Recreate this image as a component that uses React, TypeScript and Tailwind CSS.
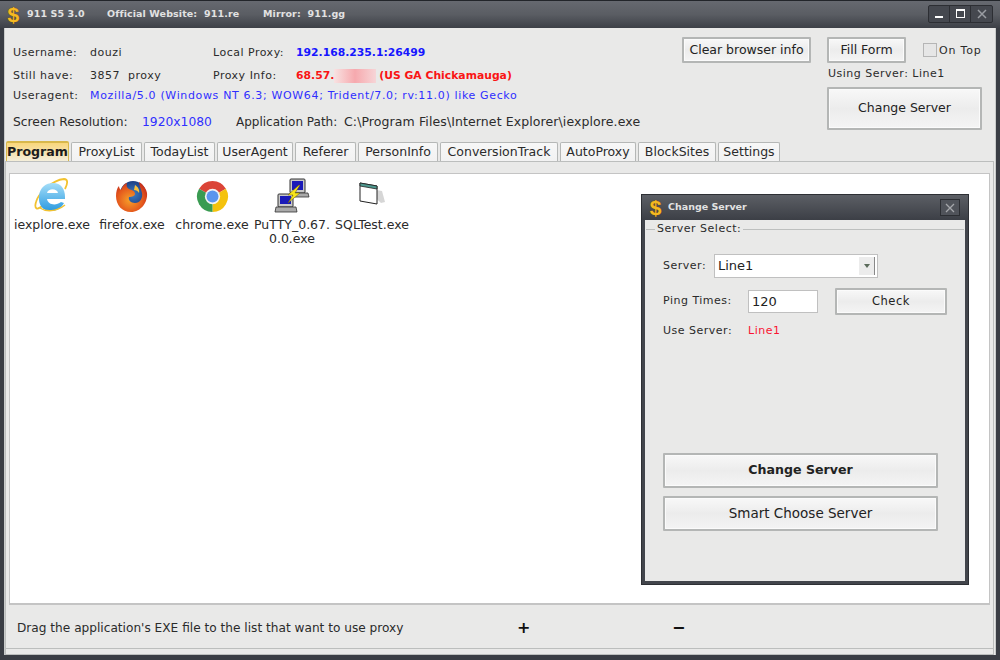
import React from "react";

const Btn = ({ className = "", children }: { className?: string; children: React.ReactNode }) => (
  <div className={"flex items-center justify-center border-2 border-[#b4b6b5] rounded-[1px] bg-gradient-to-b from-[#f8f8f8] via-[#ececec] to-[#f4f4f4] shadow-[inset_0_0_0_1px_#fbfbfb] text-[#222] " + className}>
    {children}
  </div>
);

const Dollar = () => (
  <span className="font-['Liberation_Sans',sans-serif] font-bold text-[21px] leading-none text-[#f5b921] [text-shadow:0_0_1px_#7a4b00]">$</span>
);

const IE = () => (
  <svg width="36" height="36" viewBox="0 0 36 36">
    <defs>
      <linearGradient id="ieg" x1="0" y1="0" x2="0" y2="1"><stop offset="0" stopColor="#a5def8" /><stop offset="1" stopColor="#2b9ae0" /></linearGradient>
    </defs>
    <path d="M9 27C3 33 0 31 2 24 4 16 18 2 30 1c4 0 4 4 1 10" fill="none" stroke="#f2c230" strokeWidth="1.8" />
    <path d="M5 18C6 9 12 5 19 5c8 0 12 6 12 14v2H13c1 6 9 7 14 3l3 1c-3 6-8 8-13 8C9 33 4 27 5 18z" fill="url(#ieg)" />
    <path d="M13 15h11c-1-5-10-5-11 0z" fill="#fff" />
    <path d="M6 30c6 4 16 4 25-3" fill="none" stroke="#f2c230" strokeWidth="1.5" />
  </svg>
);

const Firefox = () => (
  <svg width="34" height="34" viewBox="0 0 34 34">
    <defs>
      <radialGradient id="ffo" cx="0.45" cy="0.6" r="0.6"><stop offset="0" stopColor="#f7a12a" /><stop offset="0.7" stopColor="#e4571c" /><stop offset="1" stopColor="#c9341c" /></radialGradient>
      <radialGradient id="ffb" cx="0.5" cy="0.5" r="0.5"><stop offset="0" stopColor="#3d7fc4" /><stop offset="1" stopColor="#1c3f83" /></radialGradient>
    </defs>
    <circle cx="18" cy="15" r="13" fill="url(#ffb)" />
    <path d="M24 3c2 1 7 5 8 11 1 9-6 19-16 19C7 33 1 26 1 17c0-4 1-8 3-10 0 2 1 3 2 4 1-3 3-6 6-7-1 3 0 5 2 6 3 1 6 2 6 5 0 2-3 3-6 3-1 3 2 6 6 6 5 0 8-5 7-10-1-4-3-8-3-11z" fill="url(#ffo)" />
    <path d="M20 6c3 2 5 5 4 8-1-2-3-3-5-3z" fill="#f9c13a" />
  </svg>
);

const Chrome = () => (
  <svg width="33" height="33" viewBox="0 0 32 32">
    <path d="M16 16 L3 8.5 A15 15 0 0 1 29 8.5 Z" fill="#db4437" />
    <path d="M16 16 L29 8.5 A15 15 0 0 1 16 31 Z" fill="#f4c20d" />
    <path d="M16 16 L16 31 A15 15 0 0 1 3 8.5 Z" fill="#3a9b52" />
    <circle cx="16" cy="16" r="7.4" fill="#f3f3f3" />
    <circle cx="16" cy="16" r="5.8" fill="#5a95ee" />
  </svg>
);

const Putty = () => (
  <svg width="36" height="36" viewBox="0 0 36 36">
    <rect x="16" y="1" width="15" height="14" rx="1" fill="#c8c8c8" stroke="#333" />
    <rect x="18" y="3" width="11" height="9" fill="#1a1ab8" />
    <path d="M16 15h18l1 4H15z" fill="#aaa" stroke="#333" strokeWidth="0.8" />
    <rect x="4" y="16" width="15" height="13" rx="1" fill="#c8c8c8" stroke="#333" />
    <rect x="6" y="18" width="11" height="8" fill="#1a1ab8" />
    <path d="M2 29h20l1 5H1z" fill="#aaa" stroke="#333" strokeWidth="0.8" />
    <path d="M25 7l-11 10h5l-5 8 12-10h-5l5-8z" fill="#f7e51c" stroke="#6b5a00" strokeWidth="0.5" />
  </svg>
);

const SqlTest = () => (
  <svg width="30" height="30" viewBox="0 0 30 30">
    <path d="M8 7l17 3 3 11-4 1z" fill="#c4c4c4" opacity="0.7" />
    <path d="M3 2l17 3v18L3 20z" fill="#fff" stroke="#222" strokeWidth="1" />
    <path d="M3 2l17 3v3L3 5z" fill="#4f9a90" stroke="#222" strokeWidth="0.8" />
  </svg>
);

const tabs = [
  ["ProxyList", "w-[71px]"],
  ["TodayList", "w-[71px]"],
  ["UserAgent", "w-[76px]"],
  ["Referer", "w-[61px]"],
  ["PersonInfo", "w-[80px]"],
  ["ConversionTrack", "w-[118px]"],
  ["AutoProxy", "w-[76px]"],
  ["BlockSites", "w-[78px]"],
  ["Settings", "w-[62px]"],
];

const files: [string, React.ReactNode][] = [
  ["iexplore.exe", <IE />],
  ["firefox.exe", <Firefox />],
  ["chrome.exe", <Chrome />],
  ["PuTTY_0.67.0.0.exe", <Putty />],
  ["SQLTest.exe", <SqlTest />],
];

export default function App() {
  return (
    <div className="relative w-[1000px] h-[660px] overflow-hidden bg-[#3a3d44] font-['DejaVu_Sans',sans-serif] text-[11px] tracking-[0.5px] text-[#2b2b2b]">
      {/* title bar */}
      <div className="h-[28px] flex items-center border-t border-[#22252a] bg-gradient-to-b from-[#666970] via-[#5a5d63] via-50% to-[#3d4047] text-[#e2e2e2] font-bold text-[9.5px] tracking-[0.1px]">
        <div className="w-[27px] flex justify-center"><Dollar /></div>
        <span className="w-[80px]">911 S5 3.0</span>
        <span className="w-[156px]">Official Website:&nbsp; 911.re</span>
        <span>Mirror:&nbsp; 911.gg</span>
        <div className="ml-auto mr-[7px] flex h-[18px] -mt-[2px] border border-[#2c2e33] rounded-[2px] bg-[#45484f]">
          <div className="w-[21px] flex items-end justify-center pb-[4px] border-r border-[#2c2e33]"><div className="w-[8px] h-[2px] bg-white" /></div>
          <div className="w-[21px] flex items-center justify-center border-r border-[#2c2e33]"><div className="w-[9px] h-[9px] border border-white border-t-2" /></div>
          <div className="w-[21px] flex items-center justify-center">
            <svg width="10" height="10" viewBox="0 0 10 10"><path d="M1 1l8 8M9 1l-8 8" stroke="#9a9da3" strokeWidth="1.5" /></svg>
          </div>
        </div>
      </div>

      {/* window body */}
      <div className="mx-[4px] h-[627px] flex flex-col bg-[#e9e9e8] border-l border-r border-[#c9cbca]">
        {/* info */}
        <div className="h-[114px] flex">
          <div className="w-[669px] pl-[8px] pt-[17px] flex flex-col">
            <div className="flex h-[16px] items-center">
              <span className="w-[77px]">Username:</span>
              <span className="w-[123px]">douzi</span>
              <span className="w-[83px]">Local Proxy:</span>
              <span className="font-bold text-[#1616ff] text-[10.8px] tracking-normal">192.168.235.1:26499</span>
            </div>
            <div className="flex h-[16px] items-center mt-[7px]">
              <span className="w-[77px]">Still have:</span>
              <span className="w-[123px]">3857&nbsp; proxy</span>
              <span className="w-[83px]">Proxy Info:</span>
              <span className="font-bold text-[#fa1414] flex items-center text-[10.8px] tracking-normal">
                68.57.
                <span className="w-[42px] h-[14px] bg-gradient-to-r from-[#f7e2e2] via-[#f6a9ae] to-[#f6d5d7]" />
                <span className="ml-[3px]">(US GA Chickamauga)</span>
              </span>
            </div>
            <div className="flex h-[16px] items-center mt-[4px]">
              <span className="w-[77px]">Useragent:</span>
              <span className="text-[#2f2fff] tracking-[0.65px]">Mozilla/5.0 (Windows NT 6.3; WOW64; Trident/7.0; rv:11.0) like Gecko</span>
            </div>
            <div className="flex h-[18px] items-center mt-[9px] text-[12.3px] tracking-normal">
              <span className="w-[129px]">Screen Resolution:</span>
              <span className="w-[94px] text-[#2f2fff]">1920x1080</span>
              <span className="w-[108px] text-[12px]">Application Path:</span>
              <span className="text-[12.5px] tracking-[0.1px]">C:\Program Files\Internet Explorer\iexplore.exe</span>
            </div>
          </div>
          <div className="pl-[8px] pt-[9px]">
            <Btn className="w-[129px] h-[26px] text-[12.5px] tracking-normal">Clear browser info</Btn>
          </div>
          <div className="pl-[16px] pt-[9px] w-[175px] shrink-0">
            <div className="flex items-center">
              <Btn className="w-[79px] h-[26px] text-[12.5px] tracking-normal">Fill Form</Btn>
              <div className="ml-[17px] w-[14px] h-[14px] border border-[#b5b5b5] bg-[#e6e6e6]" />
              <span className="ml-[2px] pt-[3px] tracking-[0.8px]">On Top</span>
            </div>
            <div className="mt-[3px] h-[16px] flex items-center pl-[1px]">Using Server: Line1</div>
            <Btn className="mt-[5px] w-[155px] h-[43px] text-[12.5px] tracking-normal">Change Server</Btn>
          </div>
        </div>

        {/* tabs */}
        <div className="h-[19px] flex items-end gap-[2px] pl-[1px] text-[12.5px] tracking-normal">
          <div className="w-[63px] h-[21px] -mb-[1px] flex items-center justify-center font-bold text-[12.6px] text-[#1c1c1c] border-t-2 border-l border-r border-[#d8b84c] rounded-t-[2px] bg-gradient-to-b from-[#f9d679] to-[#f3efdf]">Program</div>
          {tabs.map(([t, w]) => (
            <div key={t} className={"h-[19px] flex items-center justify-center border border-b-0 border-[#b5b7b6] rounded-t-[2px] bg-gradient-to-b from-[#f7f7f7] to-[#f2f2f2] " + w}>{t}</div>
          ))}
        </div>

        {/* content */}
        <div className="flex-1 flex flex-col border border-[#bcbebd] mr-[1px]">
          <div className="h-[11px]" />
          <div className="mx-[3px] h-[432px] bg-white border border-[#c4c4c4] border-b-2 flex items-start pt-[4px] pl-[2px] text-[12.5px] tracking-normal">
            {files.map(([name, icon]) => (
              <div key={name} className="w-[80px] flex flex-col items-center text-center">
                <div className="h-[36px] flex items-center justify-center">{icon}</div>
                <span className="mt-[4px] leading-[14px] break-all w-full">{name}</span>
              </div>
            ))}
          </div>
          <div className="flex-1 flex items-center pl-[11px] pt-[3px] text-[12.15px] tracking-normal">
            <span className="w-[500px]">Drag the application's EXE file to the list that want to use proxy</span>
            <span className="w-[155px] font-bold text-[16px] text-[#111]">+</span>
            <span className="font-bold text-[16px] text-[#111]">−</span>
          </div>
          <div className="h-[6px] border-t border-[#bcbebd]" />
        </div>
      </div>

      {/* floating dialog */}
      <div className="absolute left-[641px] top-[194px] w-[328px] h-[391px] flex flex-col bg-[#42454c] border border-[#2d2f34] tracking-[0.5px]">
        <div className="h-[25px] flex items-center bg-gradient-to-b from-[#5c5f65] to-[#3c3f46] text-[#e2e2e2] font-bold text-[9.5px] tracking-normal">
          <div className="w-[26px] pl-[1px] flex justify-center"><Dollar /></div>
          <span>Change Server</span>
          <div className="ml-auto mr-[8px] w-[20px] h-[17px] flex items-center justify-center border border-[#2c2e33] bg-[#50535a]">
            <svg width="10" height="10" viewBox="0 0 10 10"><path d="M1 1l8 8M9 1l-8 8" stroke="#a5a7ab" strokeWidth="1.3" /></svg>
          </div>
        </div>
        <div className="flex-1 mx-[3px] mb-[3px] bg-[#e9e9e8] pt-[2px]">
          <div className="h-full flex flex-col">
            <div className="h-[14px] flex items-center">
              <div className="w-[9px] ml-[1px] h-px bg-[#bdbfbe]" />
              <span className="px-[2px] leading-[14px]">Server Select:</span>
              <div className="flex-1 mr-[1px] h-px bg-[#bdbfbe]" />
            </div>
            <div className="pl-[18px] pt-[18px] flex items-center">
              <span className="w-[51px]">Server:</span>
              <div className="w-[164px] h-[24px] bg-white border border-[#c0c0c0] flex items-center pl-[3px] pr-[1px] text-[13px] text-[#222] tracking-normal">
                Line1
                <div className="ml-auto mr-[1px] w-[16px] h-[18px] border-r border-[#888] bg-[#ececec] flex items-center justify-center">
                  <div className="w-0 h-0 border-l-[3px] border-r-[3px] border-t-[4px] border-l-transparent border-r-transparent border-t-[#5b6b5b]" />
                </div>
              </div>
            </div>
            <div className="pl-[18px] pt-[10px] flex items-center">
              <span className="w-[85px]">Ping Times:</span>
              <div className="w-[70px] h-[23px] bg-white border border-[#c0c0c0] flex items-center pl-[3px] text-[13px] text-[#222] tracking-normal">120</div>
              <Btn className="ml-[17px] w-[112px] h-[27px] text-[11.5px]">Check</Btn>
            </div>
            <div className="pl-[18px] pt-[9px] flex items-center h-[24px]">
              <span className="w-[85px]">Use Server:</span>
              <span className="text-[#fa1433]">Line1</span>
            </div>
            <div className="mt-[114px] ml-[18px] flex flex-col gap-[8px] tracking-normal">
              <Btn className="w-[275px] h-[35px] font-bold text-[#111] text-[12.6px]">Change Server</Btn>
              <Btn className="w-[275px] h-[35px] text-[13.5px]">Smart Choose Server</Btn>
            </div>
          </div>
        </div>
      </div>
    </div>
  );
}
